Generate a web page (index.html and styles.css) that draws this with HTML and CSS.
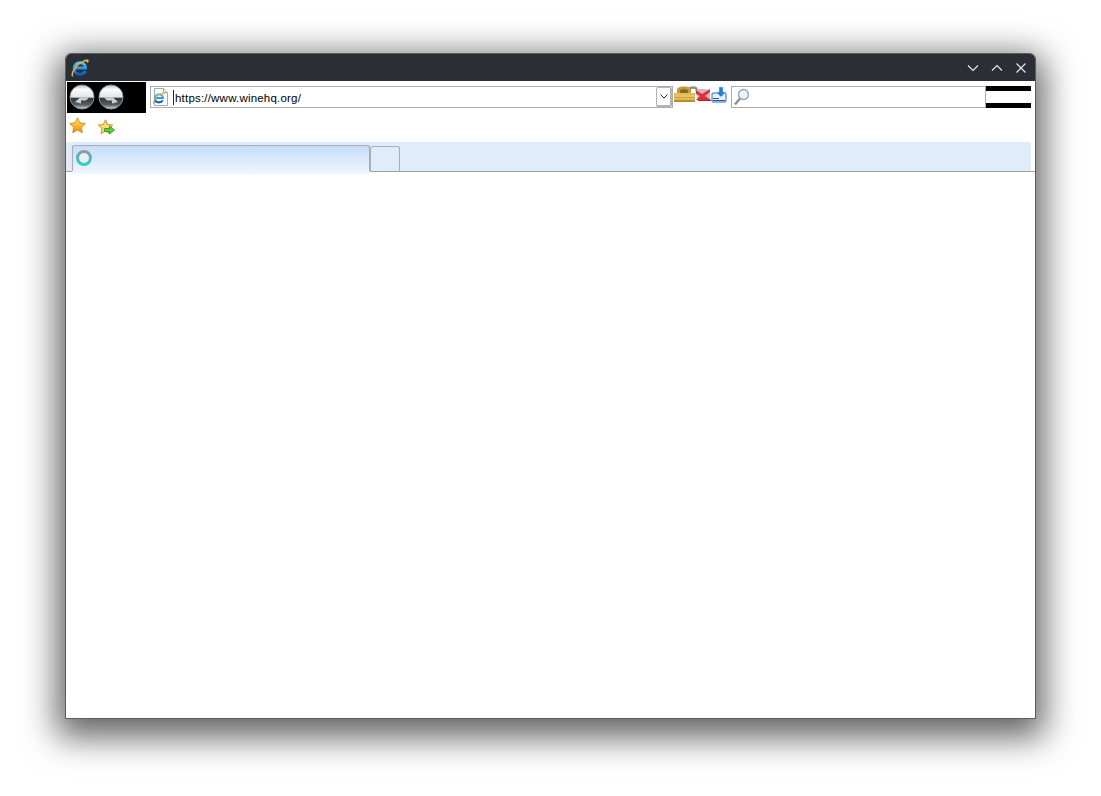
FILE: index.html
```html
<!DOCTYPE html>
<html lang="en">
<head>
  <meta charset="UTF-8">
  <title>Internet Explorer</title>
  <link rel="stylesheet" href="styles.css">
</head>
<body>
  <svg class="defs" width="0" height="0" aria-hidden="true">
    <defs>
      <linearGradient id="ball" x1="0" y1="0" x2="0" y2="1">
        <stop offset="0" stop-color="#aeb9bf"/>
        <stop offset="0.18" stop-color="#fbfdfd"/>
        <stop offset="0.5" stop-color="#dfe6e9"/>
        <stop offset="0.56" stop-color="#34383b"/>
        <stop offset="0.82" stop-color="#555b5f"/>
        <stop offset="1" stop-color="#d4dadd"/>
      </linearGradient>
      <linearGradient id="star" x1="0" y1="0" x2="0" y2="1">
        <stop offset="0" stop-color="#ffe47a"/>
        <stop offset="0.6" stop-color="#fbb021"/>
        <stop offset="1" stop-color="#e98a0c"/>
      </linearGradient>
      <linearGradient id="ie" x1="0" y1="0" x2="0" y2="1">
        <stop offset="0" stop-color="#58c4f4"/>
        <stop offset="1" stop-color="#0a5fc4"/>
      </linearGradient>
      <linearGradient id="gold" x1="0" y1="0" x2="0" y2="1">
        <stop offset="0" stop-color="#e9c25c"/>
        <stop offset="1" stop-color="#b5861f"/>
      </linearGradient>
      <linearGradient id="ring" x1="0" y1="0" x2="0" y2="1">
        <stop offset="0" stop-color="#8a9cab"/>
        <stop offset="1" stop-color="#2fd0c4"/>
      </linearGradient>
      <symbol id="ie-logo" viewBox="0 0 20 20">
        <path d="M5 10h10.500C15.500 6.500 13 4.800 10.200 4.800 6.800 4.800 4.200 7.200 4.200 10.700c0 3.300 2.500 5.500 5.800 5.500 2.400 0 4.300-1 5.400-3" fill="none" stroke="url(#ie)" stroke-width="3"/>
        <path d="M1.600 17.800C.6 14.400 5.500 6.300 12.500 2.900c3.300-1.600 5.800-1.700 6.200-.3.200.8-.4 2-1.300 3 .2-1.300-.3-2.200-1.800-2.200C10.700 3.400 3.500 11.500 3 16.500c-.1.900.2 1.500.7 1.800-.9.300-1.800.1-2.100-.5z" fill="#e5b53a"/>
      </symbol>
    </defs>
  </svg>

  <div class="window">
    <div class="titlebar">
      <svg class="app-icon" width="20" height="20"><use href="#ie-logo"/></svg>
      <div class="win-buttons">
        <svg width="12" height="12" viewBox="0 0 12 12"><path d="M1 3.500l5 5 5-5"/></svg>
        <svg width="12" height="12" viewBox="0 0 12 12"><path d="M1 8.500l5-5 5 5"/></svg>
        <svg width="12" height="12" viewBox="0 0 12 12"><path d="M1.500 1.500l9 9M10.500 1.500l-9 9"/></svg>
      </div>
    </div>

    <div class="navbar">
      <div class="nav-buttons">
        <svg width="26" height="26" viewBox="0 0 26 26">
          <circle cx="13" cy="13" r="12" fill="url(#ball)" stroke="#8d979c"/>
          <path d="M6 18l5-4.500h9l-3 3h-5v3z" fill="#c9cfd2"/>
        </svg>
        <svg width="26" height="26" viewBox="0 0 26 26">
          <circle cx="13" cy="13" r="12" fill="url(#ball)" stroke="#8d979c"/>
          <path d="M20 18l-5-4.500H6l3 3h5v3z" fill="#c9cfd2"/>
        </svg>
      </div>

      <div class="address">
        <svg class="page-icon" width="17" height="18" viewBox="0 0 17 18">
          <path d="M2.500.5h9l4 4v13h-13z" fill="#fff" stroke="#a3a9b0"/>
          <path d="M11.500.5v4h4" fill="#e4e8ec" stroke="#a3a9b0"/>
          <svg x="0" y="3" width="14" height="14"><use href="#ie-logo"/></svg>
        </svg>
        <span class="url">https://www.winehq.org/</span>
        <span class="dropdown">
          <svg width="8" height="5" viewBox="0 0 8 5"><path d="M.5.5L4 4 7.500.5"/></svg>
        </span>
      </div>

      <div class="status-icons">
        <svg width="26" height="17" viewBox="0 0 26 17">
          <path d="M15 8V5c0-2.500 2-3.500 4-3.500s4 1 4 3.500v3" fill="none" stroke="#8f8f90" stroke-width="2.500"/>
          <path d="M3 7V4c0-2 2.500-3.500 7-3.500S17 2 17 4v3z" fill="#c59a3a"/>
          <path d="M6 7V5c0-1.200 1.500-2 4-2s4 .8 4 2v2z" fill="#8a6a22"/>
          <rect x="0" y="7" width="21" height="9" fill="url(#gold)"/>
          <path d="M0 10h21M0 13h21" stroke="#f4dc8a"/>
        </svg>
        <svg class="stop" width="17" height="16" viewBox="0 0 17 16">
          <path d="M2 2h7l6 1v10H7l-5-1z" fill="#d9b6b8"/>
          <path d="M1 3l6 4 8-5v3l-5 4 6 4H1l4-4-4-2z" fill="#d8323e"/>
          <path d="M3 13h13v1H3z" fill="#b02028"/>
        </svg>
        <svg class="refresh" width="16" height="17" viewBox="0 0 16 17">
          <rect x="1" y="7" width="14" height="9" rx="1" fill="#e9eff6" stroke="#2f6fb8"/>
          <path d="M2 12h6v1H2zM2 14h12v1H2z" fill="#1f5fa8"/>
          <path d="M8 1h4v5h3l-5 5-5-5h3z" fill="#1d7fd0" stroke="#bcd9f2" stroke-width=".6"/>
        </svg>
      </div>

      <div class="search">
        <svg width="17" height="18" viewBox="0 0 17 18">
          <circle cx="10.500" cy="6.500" r="5" fill="#eaf3fb" stroke="#9aa7b2" stroke-width="1.400"/>
          <path d="M7 10.500l-5 6" stroke="#8b8f92" stroke-width="2.400"/>
        </svg>
      </div>
      <div class="search-btn"></div>
    </div>

    <div class="favbar">
      <svg width="17" height="17" viewBox="0 0 17 17">
        <path d="M8.500.8l2.400 5 5.400.7-4 3.800 1 5.400-4.800-2.600-4.800 2.600 1-5.400-4-3.800 5.400-.7z" fill="url(#star)" stroke="#c9810f" stroke-width=".8"/>
      </svg>
      <svg class="add-fav" width="17" height="17" viewBox="0 0 17 17">
        <path d="M7.500.8l2.200 4.600 5 .7-3.700 3.500.9 5-4.400-2.400-4.400 2.400.9-5L.3 6.100l5-.7z" fill="#fcd77a" stroke="#c9890f" stroke-width=".9"/>
        <path d="M6.500 9.500h5V7l5 4-5 4v-2.500h-5z" fill="#5fd03c" stroke="#2a8f1e" stroke-width=".8"/>
      </svg>
    </div>

    <div class="tabstrip">
      <div class="tab">
        <svg width="18" height="18" viewBox="0 0 18 18">
          <circle cx="9" cy="9" r="6.500" fill="#e4eff9" stroke="url(#ring)" stroke-width="3"/>
        </svg>
      </div>
      <div class="new-tab"></div>
    </div>

    <div class="content"></div>
  </div>
</body>
</html>
```

FILE: styles.css
```css
html, body {
  margin: 0;
  height: 100%;
  background: #fff;
  overflow: hidden;
}
body {
  padding: 53px 65px 0;
  box-sizing: border-box;
  font-family: "Liberation Sans", Arial, sans-serif;
}
.defs {
  position: absolute;
}
.window {
  width: 971px;
  height: 666px;
  box-sizing: border-box;
  border: 1px solid #5a5c60;
  border-radius: 6px 6px 0 0;
  background: #fff;
  box-shadow: 0 10px 34px 8px rgba(0,0,0,0.62);
  display: flex;
  flex-direction: column;
}
.titlebar {
  height: 27px;
  flex: none;
  background: #2b2e34;
  border-radius: 5px 5px 0 0;
  display: flex;
  align-items: center;
  justify-content: space-between;
  padding: 0 8px 0 4px;
}
.app-icon {
  display: block;
}
.win-buttons {
  display: flex;
  gap: 12px;
}
.win-buttons svg {
  display: block;
  fill: none;
  stroke: #e6e7e9;
  stroke-width: 1.2;
}
.navbar {
  height: 32px;
  flex: none;
  display: flex;
  align-items: flex-start;
  padding-left: 1px;
  padding-top: 1px;
}
.nav-buttons {
  width: 79px;
  height: 31px;
  background: #000;
  display: flex;
  gap: 3px;
  padding: 2px 0 0 2px;
  box-sizing: border-box;
}
.nav-buttons svg {
  display: block;
}
.address {
  width: 523px;
  height: 22px;
  margin: 4px 0 0 4px;
  box-sizing: border-box;
  border: 1px solid #adadad;
  display: flex;
  align-items: center;
  padding-left: 1px;
}
.page-icon {
  flex: none;
  display: block;
}
.url {
  flex: 1;
  margin-left: 4px;
  padding: 1px 0 0 1px;
  border-left: 1px solid #102a70;
  font-size: 11.5px;
  line-height: 14px;
  color: #000;
  letter-spacing: 0.2px;
}
.dropdown {
  width: 16px;
  height: 20px;
  box-sizing: border-box;
  border: 1px solid #b4b4b4;
  border-right-width: 2px;
  border-bottom-width: 2px;
  border-radius: 2px;
  display: flex;
  align-items: center;
  justify-content: center;
}
.dropdown svg {
  fill: none;
  stroke: #333;
}
.status-icons {
  width: 53px;
  margin: 4px 0 0 1px;
  display: flex;
}
.status-icons svg {
  display: block;
  flex: none;
}
.status-icons .stop {
  margin-left: -5px;
  margin-top: 1px;
}
.status-icons .refresh {
  margin-left: -1px;
}
.search {
  width: 255px;
  height: 22px;
  margin: 4px 0 0 4px;
  box-sizing: border-box;
  border: 1px solid #adadad;
  padding: 1px 0 0 1px;
}
.search svg {
  display: block;
}
.search-btn {
  width: 45px;
  height: 22px;
  margin-top: 4px;
  box-sizing: border-box;
  border-top: 5px solid #000;
  border-bottom: 5px solid #000;
}
.favbar {
  height: 28px;
  flex: none;
  display: flex;
  gap: 11px;
  padding: 3px 0 0 3px;
  box-sizing: border-box;
}
.favbar svg {
  display: block;
}
.favbar .add-fav {
  margin: 2px 0 0 1px;
}
.tabstrip {
  height: 30px;
  flex: none;
  box-sizing: border-box;
  padding: 3px 0 0 6px;
  background: #e0ecf9;
  display: flex;
  align-items: flex-start;
  border-bottom: 1px solid #9a9fa8;
  box-shadow: inset -4px 0 0 #fff;
}
.tab {
  width: 298px;
  height: 29px;
  box-sizing: border-box;
  background: linear-gradient(#c5dcf8, #f1f6fd);
  padding: 4px 0 0 3px;
  position: relative;
  z-index: 1;
}
/* border stops at the strip line, the tab body runs on below it */
.tab::before {
  content: "";
  position: absolute;
  top: 0;
  left: 0;
  right: 0;
  height: 26px;
  box-sizing: border-box;
  border: 1px solid #a8adb5;
  border-bottom: none;
  border-radius: 3px 3px 0 0;
}
.tab svg {
  display: block;
}
.new-tab {
  width: 30px;
  height: 25px;
  margin-top: 1px;
  box-sizing: border-box;
  border: 1px solid #a8adb5;
  border-bottom: none;
  border-radius: 3px 3px 0 0;
}
.content {
  flex: 1;
  background: #fff;
}
```
